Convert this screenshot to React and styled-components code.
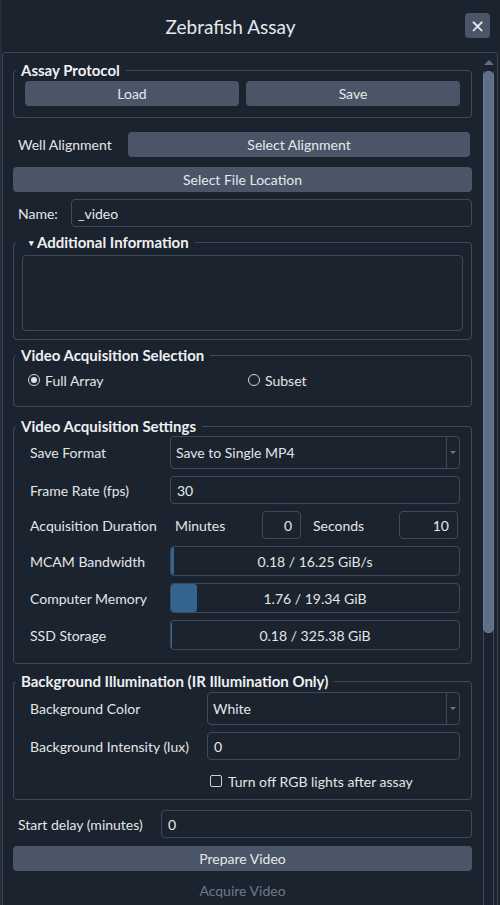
import React from 'react';
import styled, { createGlobalStyle } from 'styled-components';

const GlobalStyle = createGlobalStyle`
  html, body {
    margin: 0;
    padding: 0;
    background: #1b232e;
    overflow: hidden;
  }
  body {
    font-family: Lato, "Noto Sans", sans-serif;
    color: #e3e5e8;
  }
`;

const border = '#3e4a5b';

const usage = [
  { label: 'MCAM Bandwidth', used: 0.18, total: 16.25, unit: 'GiB/s' },
  { label: 'Computer Memory', used: 1.76, total: 19.34, unit: 'GiB' },
  { label: 'SSD Storage', used: 0.18, total: 325.38, unit: 'GiB' },
];

function App() {
  return (
    <>
      <GlobalStyle />
      <Window>
        <TitleBar>
          <Title>Zebrafish Assay</Title>
          <CloseButton aria-label="close">×</CloseButton>
        </TitleBar>

        <Frame>
          <Content>
            <Group>
              <Legend>Assay Protocol</Legend>
              <GroupBody $pad="2px 11px 11px 11px">
                <ButtonRow>
                  <Button>Load</Button>
                  <Button>Save</Button>
                </ButtonRow>
              </GroupBody>
            </Group>

            <Row $mt={14} $h={25}>
              <Label $w={115}>Well Alignment</Label>
              <Button $mr={2}>Select Alignment</Button>
            </Row>

            <Button $block $mt={10}>Select File Location</Button>

            <Row $mt={7} $h={28}>
              <Label $w={58}>Name:</Label>
              <Input readOnly value="_video" />
            </Row>

            <Group $mt={6}>
              <Legend $indent={13}>
                <Caret>▾</Caret>Additional Information
              </Legend>
              <GroupBody $pad="3px 8px 8px 8px">
                <TextArea readOnly />
              </GroupBody>
            </Group>

            <Group $mt={6}>
              <Legend>Video Acquisition Selection</Legend>
              <GroupBody $pad="7px 2px 17px 14px">
                <RadioGrid>
                  <Choice>
                    <Radio $checked />
                    Full Array
                  </Choice>
                  <Choice>
                    <Radio />
                    Subset
                  </Choice>
                </RadioGrid>
              </GroupBody>
            </Group>

            <Group $mt={10}>
              <Legend>Video Acquisition Settings</Legend>
              <GroupBody $pad="1px 11px 13px 16px" $gap={7}>
                <FormRow $label={140}>
                  <FieldLabel>Save Format</FieldLabel>
                  <Combo>
                    <ComboText>Save to Single MP4</ComboText>
                    <ComboArrow />
                  </Combo>
                </FormRow>
                <FormRow $label={140}>
                  <FieldLabel>Frame Rate (fps)</FieldLabel>
                  <Input readOnly value="30" />
                </FormRow>
                <FormRow $label={140}>
                  <FieldLabel>Acquisition Duration</FieldLabel>
                  <Duration>
                    <SubLabel $w={92} $pl={5}>Minutes</SubLabel>
                    <Spin $w={39} readOnly value="0" />
                    <SubLabel $w={98} $pl={12}>Seconds</SubLabel>
                    <Spin $w={59} readOnly value="10" />
                  </Duration>
                </FormRow>
                {usage.map((u) => (
                  <FormRow key={u.label} $label={140}>
                    <FieldLabel>{u.label}</FieldLabel>
                    <Progress>
                      <Fill style={{ width: `${(u.used / u.total) * 100}%` }} />
                      <ProgressText>
                        {u.used.toFixed(2)} / {u.total.toFixed(2)} {u.unit}
                      </ProgressText>
                    </Progress>
                  </FormRow>
                ))}
              </GroupBody>
            </Group>

            <Group $mt={8}>
              <Legend>Background Illumination (IR Illumination Only)</Legend>
              <GroupBody $pad="2px 11px 8px 16px" $gap={7}>
                <FormRow $label={177}>
                  <FieldLabel>Background Color</FieldLabel>
                  <Combo>
                    <ComboText>White</ComboText>
                    <ComboArrow />
                  </Combo>
                </FormRow>
                <FormRow $label={177}>
                  <FieldLabel>Background Intensity (lux)</FieldLabel>
                  <Input readOnly value="0" />
                </FormRow>
                <CheckRow>
                  <Check />
                  Turn off RGB lights after assay
                </CheckRow>
              </GroupBody>
            </Group>

            <Row $mt={10} $h={28}>
              <Label $w={148}>Start delay (minutes)</Label>
              <Input readOnly value="0" />
            </Row>

            <Button $block $mt={8}>Prepare Video</Button>
            <Button $block $mt={7} disabled>Acquire Video</Button>
          </Content>

          <Scrollbar>
            <ScrollArrow />
            <Track>
              <Handle />
            </Track>
          </Scrollbar>
        </Frame>
      </Window>
    </>
  );
}

export default App;

const Window = styled.div`
  width: 500px;
  height: 905px;
  box-sizing: border-box;
  border-left: 2px solid #242d39;
  background: #1b232e;
  display: flex;
  flex-direction: column;
  overflow: hidden;
`;

const TitleBar = styled.div`
  height: 52px;
  flex: none;
  display: flex;
  align-items: center;
  padding-right: 10px;
`;

const Title = styled.div`
  flex: 1;
  text-align: center;
  font-size: 19px;
  color: #e6e8eb;
  padding-right: 6px;
`;

const CloseButton = styled.button`
  width: 25px;
  height: 25px;
  margin-top: -1px;
  border: none;
  border-radius: 4px;
  background: #4a5567;
  color: #f2f2f2;
  font-size: 18px;
  line-height: 25px;
  padding: 0;
  font-family: "DejaVu Sans", sans-serif;
`;

const Frame = styled.div`
  flex: 1;
  display: flex;
  margin-right: 2px;
  border: 1px solid #3b4656;
  border-bottom: none;
  border-radius: 4px 4px 0 0;
  min-height: 0;
`;

const Content = styled.div`
  flex: 1;
  display: flex;
  flex-direction: column;
  padding: 8px 11px 0 10px;
  font-size: 14px;
`;

const Group = styled.fieldset`
  margin: ${(p) => p.$mt || 0}px 0 0;
  padding: 0;
  border: 1px solid ${border};
  border-radius: 4px;
  min-width: 0;
`;

const Legend = styled.legend`
  margin-left: 2px;
  padding: 0 6px 0 ${(p) => p.$indent || 5}px;
  font-weight: 700;
  font-size: 15px;
  line-height: 18px;
  color: #eef0f2;
`;

const Caret = styled.span`
  font-size: 9px;
  margin-right: 3px;
  vertical-align: 2px;
`;

const GroupBody = styled.div`
  padding: ${(p) => p.$pad};
  display: flex;
  flex-direction: column;
  gap: ${(p) => p.$gap || 0}px;
`;

const ButtonRow = styled.div`
  display: flex;
  gap: 7px;
`;

const Button = styled.button`
  height: 25px;
  flex: ${(p) => (p.$block ? 'none' : 1)};
  margin: ${(p) => p.$mt || 0}px ${(p) => p.$mr || 0}px 0 0;
  padding: 0;
  border: none;
  border-radius: 4px;
  background: ${(p) => (p.disabled ? 'transparent' : '#4a5567')};
  color: ${(p) => (p.disabled ? '#6c7a8b' : '#e6e8eb')};
  font-family: Lato, "Noto Sans", sans-serif;
  font-size: 14px;
`;

const Row = styled.div`
  display: flex;
  align-items: center;
  height: ${(p) => p.$h}px;
  margin-top: ${(p) => p.$mt || 0}px;
`;

const Label = styled.div`
  width: ${(p) => p.$w}px;
  flex: none;
  box-sizing: border-box;
  padding-left: 5px;
  white-space: nowrap;
`;

const Input = styled.input`
  flex: 1;
  min-width: 0;
  height: 28px;
  box-sizing: border-box;
  border: 1px solid ${border};
  border-radius: 4px;
  background: transparent;
  color: #e6e8eb;
  font-family: Lato, "Noto Sans", sans-serif;
  font-size: 14px;
  padding: 0 6px;
  outline: none;
`;

const TextArea = styled.textarea`
  height: 76px;
  box-sizing: border-box;
  border: 1px solid ${border};
  border-radius: 4px;
  background: transparent;
  resize: none;
  outline: none;
`;

const RadioGrid = styled.div`
  display: grid;
  grid-template-columns: 220px 1fr;
  height: 18px;
  align-items: center;
`;

const Choice = styled.div`
  display: flex;
  align-items: center;
  gap: 5px;
`;

const Radio = styled.span`
  width: 12px;
  height: 12px;
  box-sizing: border-box;
  border: 1px solid #cfd3d8;
  border-radius: 50%;
  display: flex;
  align-items: center;
  justify-content: center;
  &::after {
    content: '';
    width: 6px;
    height: 6px;
    border-radius: 50%;
    background: ${(p) => (p.$checked ? '#dfe2e6' : 'transparent')};
  }
`;

const FormRow = styled.div`
  display: grid;
  grid-template-columns: ${(p) => p.$label}px 1fr;
  align-items: center;
`;

const FieldLabel = styled.div`
  white-space: nowrap;
`;

const Combo = styled.div`
  height: 33px;
  box-sizing: border-box;
  border: 1px solid ${border};
  border-radius: 4px;
  display: flex;
  align-items: center;
`;

const ComboText = styled.div`
  flex: 1;
  padding-left: 5px;
`;

const ComboArrow = styled.div`
  width: 12px;
  align-self: stretch;
  border-left: 1px solid ${border};
  display: flex;
  align-items: center;
  justify-content: center;
  &::after {
    content: '';
    border-left: 3px solid transparent;
    border-right: 3px solid transparent;
    border-top: 3px solid #6f7a88;
  }
`;

const Duration = styled.div`
  display: flex;
  align-items: center;
`;

const SubLabel = styled.div`
  width: ${(p) => p.$w}px;
  padding-left: ${(p) => p.$pl}px;
  box-sizing: border-box;
`;

const Spin = styled(Input)`
  flex: none;
  width: ${(p) => p.$w}px;
  text-align: right;
  padding-right: 8px;
`;

const Progress = styled.div`
  height: 30px;
  box-sizing: border-box;
  border: 1px solid ${border};
  border-radius: 4px;
  display: grid;
  overflow: hidden;
`;

const Fill = styled.div`
  grid-area: 1 / 1;
  justify-self: start;
  background: #35648f;
  border-radius: 3px;
`;

const ProgressText = styled.div`
  grid-area: 1 / 1;
  align-self: center;
  text-align: center;
`;

const CheckRow = styled.div`
  display: flex;
  align-items: center;
  gap: 6px;
  height: 20px;
  margin-top: 4px;
  padding-left: 180px;
`;

const Check = styled.span`
  width: 12px;
  height: 12px;
  box-sizing: border-box;
  border: 1px solid #cfd3d8;
  border-radius: 2px;
`;

const Scrollbar = styled.div`
  width: 11px;
  flex: none;
  margin-right: 3px;
  padding-top: 7px;
  display: flex;
  flex-direction: column;
  align-items: center;
`;

const ScrollArrow = styled.div`
  width: 0;
  height: 0;
  border-left: 5px solid transparent;
  border-right: 5px solid transparent;
  border-bottom: 5px solid #5c6f85;
`;

const Track = styled.div`
  flex: 1;
  width: 11px;
  box-sizing: border-box;
  margin-top: 6px;
  border-left: 1px solid ${border};
  border-right: 1px solid ${border};
`;

const Handle = styled.div`
  height: 560px;
  margin: 0 -1px;
  background: #5d7086;
  border: 1px solid #6a7e95;
  border-radius: 5px;
`;
